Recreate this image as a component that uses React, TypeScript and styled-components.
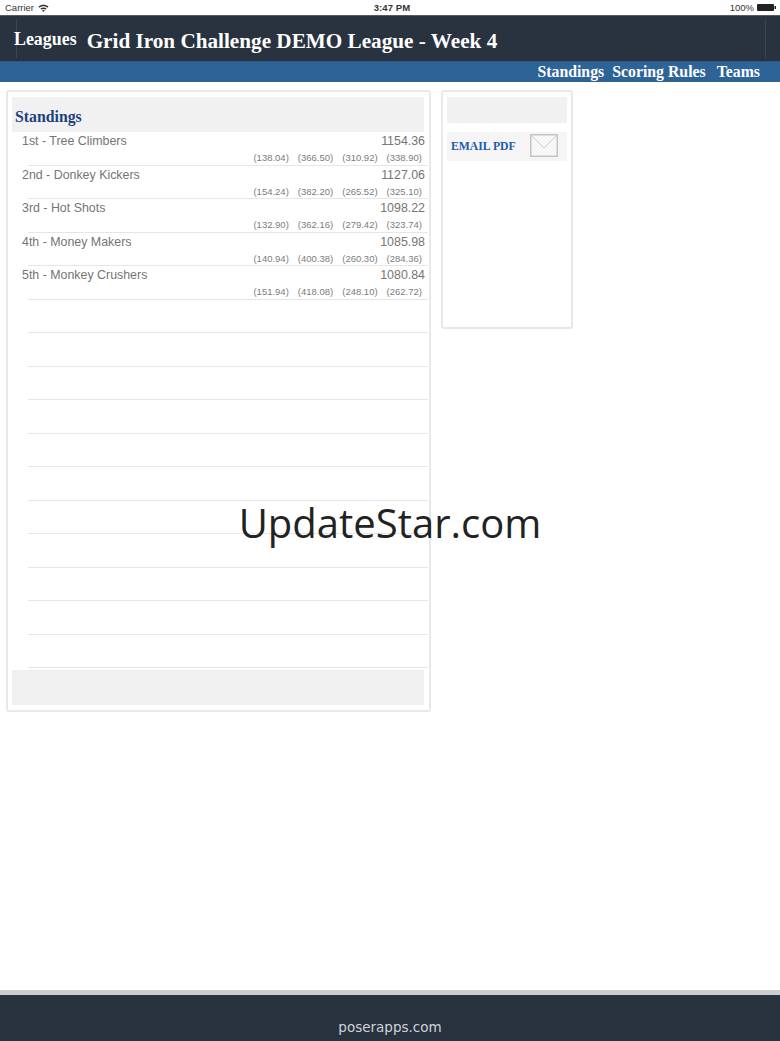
import React, {FC} from 'react';
import styled, {createGlobalStyle} from 'styled-components';

const serif = '"Liberation Serif", serif';
const sans = '"Liberation Sans", Arial, sans-serif';

const GlobalStyle = createGlobalStyle`
  html, body {
    margin: 0;
    padding: 0;
    background: #fff;
  }
`

const Page = styled.div`
  position: relative;
  width: 780px;
  height: 1041px;
  overflow: hidden;
  display: flex;
  flex-direction: column;
  font-family: ${sans};
`

const StatusBar = styled.div`
  height: 15px;
  display: grid;
  grid-template-columns: 1fr auto 1fr;
  align-items: center;
  padding: 0 4px 0 5px;
  font-size: 9.5px;
  color: #333;
  background: #fff;
`
const StatusLeft = styled.div`
  display: flex;
  align-items: center;
  gap: 4px;
`
const StatusTime = styled.div`
  padding-left: 3px;
  font-weight: bold;
  letter-spacing: 0.1px;
`
const StatusRight = styled.div`
  display: flex;
  justify-content: flex-end;
  align-items: center;
  gap: 3px;
`

const Header = styled.header`
  position: relative;
  height: 46px;
  flex: none;
  box-sizing: border-box;
  padding: 5px 0 0 14px;
  display: flex;
  align-items: center;
  gap: 10px;
  background: #29323f;
  border-top: 1px solid #555b64;
  color: #fff;
  font-family: ${serif};
  font-weight: bold;
  &::before, &::after {
    content: '';
    position: absolute;
    top: 3px;
    bottom: 3px;
    width: 1px;
    background: #3a4452;
  }
  &::before {
    left: 16px;
  }
  &::after {
    right: 14px;
  }
`
const BackLink = styled.span`
  position: relative;
  font-size: 17.9px;
  margin-top: -3px;
`
const Title = styled.h1`
  margin: 0;
  font-size: 21.2px;
  font-weight: bold;
`

const Nav = styled.nav`
  height: 21px;
  flex: none;
  box-sizing: border-box;
  padding-right: 20px;
  display: flex;
  justify-content: flex-end;
  align-items: center;
  gap: 8px;
  background: #2e6398;
  border-top: 1px solid #28578a;
  color: #fff;
  font-family: ${serif};
  font-weight: bold;
  font-size: 15.8px;
`
const NavItem = styled.span<{$gap?: number}>`
  margin-left: ${p => p.$gap || 0}px;
`

const Content = styled.main`
  flex: 1;
  display: flex;
  align-items: flex-start;
  gap: 10px;
  padding: 8px 0 0 6px;
`

const Panel = styled.section<{$width: number; $height: number; $paddingRight: number}>`
  width: ${p => p.$width}px;
  height: ${p => p.$height}px;
  flex: none;
  box-sizing: border-box;
  padding: 5px ${p => p.$paddingRight}px 0 4px;
  border: 2px solid #e8e8e8;
  border-radius: 3px;
  background: #fff;
`

const PanelHead = styled.div`
  height: 35px;
  box-sizing: border-box;
  padding: 11px 0 0 3px;
  background: #f1f1f1;
  color: #1f3f7d;
  font-family: ${serif};
  font-weight: bold;
  font-size: 15.8px;
`

const Row = styled.div`
  height: 33.5px;
  box-sizing: border-box;
  position: relative;
  padding: 2px 0 0 10px;
  display: flex;
  flex-direction: column;
  &::after {
    content: '';
    position: absolute;
    left: 16px;
    right: -4px;
    bottom: 0;
    height: 1px;
    background: #e6e6e6;
  }
`
const RowTop = styled.div`
  display: flex;
  justify-content: space-between;
  margin-right: -1px;
  color: #757575;
  font-size: 12.4px;
  line-height: 14px;
`
const Total = styled.span`
  font-size: 12.4px;
`
const Splits = styled.div`
  margin-top: 4px;
  padding-right: 2px;
  display: flex;
  justify-content: flex-end;
  gap: 9px;
  color: #7c7c7c;
  font-size: 9.5px;
  line-height: 11px;
`

const PanelFoot = styled.div`
  height: 35px;
  margin-top: 2px;
  background: #f0f0f0;
`

const SideHead = styled.div`
  height: 26px;
  background: #f1f1f1;
`
const EmailRow = styled.div`
  height: 29px;
  margin-top: 9px;
  box-sizing: border-box;
  padding: 0 9px 2px 4px;
  display: flex;
  justify-content: space-between;
  align-items: center;
  background: #f5f5f5;
`
const EmailLabel = styled.span`
  margin-top: 2px;
  color: #1b5cab;
  font-family: ${serif};
  font-weight: bold;
  font-size: 11.7px;
`

const Footer = styled.footer`
  height: 51px;
  flex: none;
  box-sizing: border-box;
  padding-top: 25px;
  border-top: 5px solid #cdcdcd;
  background: #29323f;
  color: #cfd3d8;
  text-align: center;
  font-family: "DejaVu Sans", sans-serif;
  font-size: 13.5px;
  line-height: 14px;
`

const Watermark = styled.div`
  position: absolute;
  left: 0;
  right: 0;
  top: 495px;
  text-align: center;
  color: #222;
  font-family: "Open Sans", sans-serif;
  font-size: 40px;
  line-height: 56px;
`

const standings = [
    {name: '1st - Tree Climbers', total: '1154.36', splits: ['(138.04)', '(366.50)', '(310.92)', '(338.90)']},
    {name: '2nd - Donkey Kickers', total: '1127.06', splits: ['(154.24)', '(382.20)', '(265.52)', '(325.10)']},
    {name: '3rd - Hot Shots', total: '1098.22', splits: ['(132.90)', '(362.16)', '(279.42)', '(323.74)']},
    {name: '4th - Money Makers', total: '1085.98', splits: ['(140.94)', '(400.38)', '(260.30)', '(284.36)']},
    {name: '5th - Monkey Crushers', total: '1080.84', splits: ['(151.94)', '(418.08)', '(248.10)', '(262.72)']},
];
const emptyRows = Array.from({length: 11}, (_, i) => i);

const WifiIcon: FC = () => (
    <svg width="11" height="8" viewBox="0 0 11 8">
        <path d="M0.5 2.6C3.3 0 7.7 0 10.5 2.6L9.5 3.7C7.2 1.7 3.8 1.7 1.5 3.7Z" fill="#333"/>
        <path d="M2.4 4.6C4 3.2 7 3.2 8.6 4.6L7.6 5.6C6.4 4.7 4.6 4.7 3.4 5.6Z" fill="#333"/>
        <path d="M4.2 6.5C5 5.9 6 5.9 6.8 6.5L5.5 8Z" fill="#333"/>
    </svg>
);

const BatteryIcon: FC = () => (
    <svg width="19" height="7" viewBox="0 0 19 7">
        <rect x="0" y="0" width="17" height="7" rx="1" fill="#222"/>
        <rect x="17.5" y="2" width="1.5" height="3" fill="#222"/>
    </svg>
);

const MailIcon: FC = () => (
    <svg width="28" height="23" viewBox="0 0 28 23">
        <rect x="0.75" y="0.75" width="26.5" height="21.5" fill="#f7f7f7" stroke="#c4c4c4" strokeWidth="1.5"/>
        <path d="M1 1L14 14L27 1" fill="none" stroke="#cccccc" strokeWidth="1"/>
    </svg>
);

const App: FC = () => (
    <Page>
        <GlobalStyle/>
        <StatusBar>
            <StatusLeft>Carrier <WifiIcon/></StatusLeft>
            <StatusTime>3:47 PM</StatusTime>
            <StatusRight>100% <BatteryIcon/></StatusRight>
        </StatusBar>
        <Header>
            <BackLink>Leagues</BackLink>
            <Title>Grid Iron Challenge DEMO League - Week 4</Title>
        </Header>
        <Nav>
            <NavItem>Standings</NavItem>
            <NavItem>Scoring Rules</NavItem>
            <NavItem $gap={3}>Teams</NavItem>
        </Nav>
        <Content>
            <Panel $width={425} $height={622} $paddingRight={5}>
                <PanelHead>Standings</PanelHead>
                {standings.map(team => (
                    <Row key={team.name}>
                        <RowTop>
                            <span>{team.name}</span>
                            <Total>{team.total}</Total>
                        </RowTop>
                        <Splits>
                            {team.splits.map((split, i) => <span key={i}>{split}</span>)}
                        </Splits>
                    </Row>
                ))}
                {emptyRows.map(i => <Row key={i}/>)}
                <PanelFoot/>
            </Panel>
            <Panel $width={132} $height={239} $paddingRight={4}>
                <SideHead/>
                <EmailRow>
                    <EmailLabel>EMAIL PDF</EmailLabel>
                    <MailIcon/>
                </EmailRow>
            </Panel>
        </Content>
        <Footer>poserapps.com</Footer>
        <Watermark>UpdateStar.com</Watermark>
    </Page>
);

export default App;
